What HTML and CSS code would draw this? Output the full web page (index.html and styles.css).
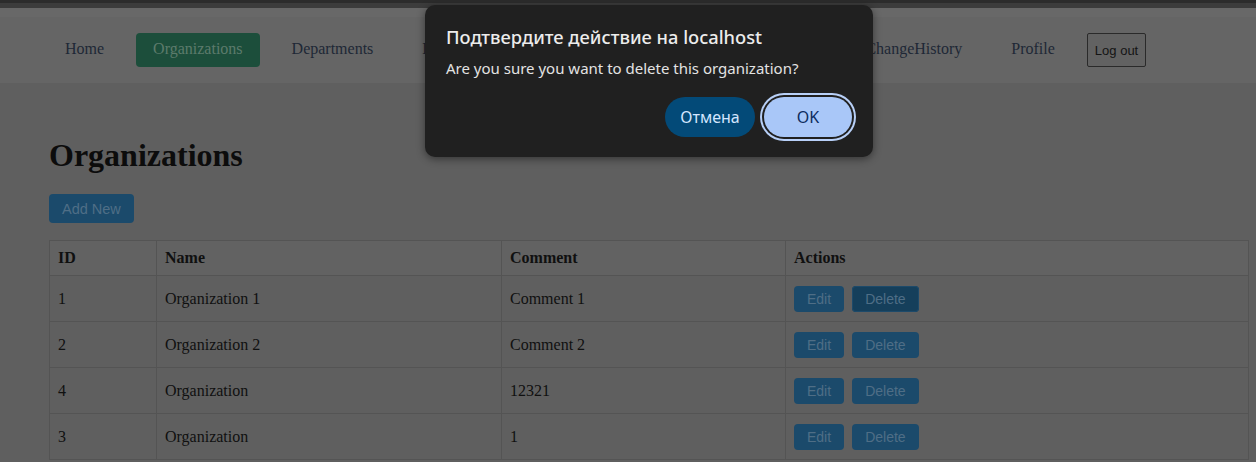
FILE: index.html
```html
<!DOCTYPE html>
<html lang="en">
<head>
<meta charset="utf-8">
<title>Organizations</title>
<link rel="stylesheet" href="styles.css">
</head>
<body>
<div class="chrome"></div>
<nav class="nav">
  <ul class="nav-list">
    <li><a class="nav-link" href="#">Home</a></li>
    <li><a class="nav-link active" href="#">Organizations</a></li>
    <li><a class="nav-link" href="#">Departments</a></li>
    <li><a class="nav-link" href="#">Employees</a></li>
    <li><a class="nav-link" href="#">Positions</a></li>
    <li><a class="nav-link" href="#">Products</a></li>
    <li><a class="nav-link" href="#">Contracts</a></li>
    <li><a class="nav-link" href="#">ChangeHistory</a></li>
    <li><a class="nav-link" href="#">Profile</a></li>
    <li><button class="logout">Log out</button></li>
  </ul>
</nav>
<main class="content">
  <h1 class="title">Organizations</h1>
  <button class="btn btn-add">Add New</button>
  <table class="grid">
    <colgroup>
      <col class="c-id"><col class="c-name"><col class="c-comment"><col class="c-actions">
    </colgroup>
    <thead>
      <tr><th>ID</th><th>Name</th><th>Comment</th><th>Actions</th></tr>
    </thead>
    <tbody>
      <tr><td>1</td><td>Organization 1</td><td>Comment 1</td><td><button class="btn">Edit</button><button class="btn btn-focus">Delete</button></td></tr>
      <tr><td>2</td><td>Organization 2</td><td>Comment 2</td><td><button class="btn">Edit</button><button class="btn">Delete</button></td></tr>
      <tr><td>4</td><td>Organization</td><td>12321</td><td><button class="btn">Edit</button><button class="btn">Delete</button></td></tr>
      <tr><td>3</td><td>Organization</td><td>1</td><td><button class="btn">Edit</button><button class="btn">Delete</button></td></tr>
    </tbody>
  </table>
</main>
<div class="dialog" role="dialog">
  <div class="dlg-title">Подтвердите действие на localhost</div>
  <div class="dlg-msg">Are you sure you want to delete this organization?</div>
  <div class="dlg-actions">
    <button class="dlg-btn dlg-cancel">Отмена</button>
    <button class="dlg-btn dlg-ok">OK</button>
  </div>
</div>
</body>
</html>
```
FILE: styles.css
```css
html, body {
  margin: 0;
  padding: 0;
}
body {
  background: #5f5f5f;
  font-family: "Liberation Serif", "Times New Roman", serif;
  font-size: 16px;
  color: #101010;
  width: 1256px;
  height: 462px;
  overflow: hidden;
  position: relative;
}
.chrome {
  height: 5px;
  background: #3c3c3c;
  border-top: 3px solid #2c2c2c;
}
.nav {
  background: #656565;
  border-top: 9px solid #686868;
  height: 75px;
  box-sizing: border-box;
  padding-top: 16px;
}
.nav-list {
  list-style: none;
  margin: 0;
  padding: 0 0 0 48px;
  display: flex;
  gap: 15px;
  align-items: center;
}
.nav-link {
  display: block;
  height: 34px;
  line-height: 32px;
  padding: 0 17px;
  color: #1e2836;
  text-decoration: none;
  border-radius: 4px;
}
.nav-link.active {
  background: #1c4e3b;
  color: #5c7b6c;
}
.logout {
  font-family: "Liberation Sans", Arial, sans-serif;
  font-size: 13px;
  color: #141414;
  background: #626262;
  border: 1px solid #2a2a2a;
  border-radius: 2px;
  height: 34px;
  padding: 0 7px;
}
.content {
  padding: 54px 7px 0 49px;
}
.title {
  font-size: 32px;
  font-weight: bold;
  margin: 0 0 20px;
  line-height: 37px;
  color: #0c0c0c;
}
.btn {
  font-family: "Liberation Sans", Arial, sans-serif;
  font-size: 14px;
  color: #4f6e86;
  background: #1b4a6b;
  border: 0;
  border-radius: 4px;
  height: 26px;
  padding: 0 13px;
  margin-right: 8px;
  vertical-align: middle;
}
.btn-add {
  height: 29px;
  font-size: 14.5px;
  padding: 0 13px;
  margin: 0 0 17px;
  display: block;
}
.btn-focus {
  background: #153f5b;
  box-shadow: inset 0 0 0 1px #1d4a6a;
}
.grid {
  border-collapse: collapse;
  width: 1200px;
}
.c-id { width: 107px; }
.c-name { width: 345px; }
.c-comment { width: 284px; }
.grid th, .grid td {
  border: 1px solid #545454;
  text-align: left;
  padding: 8px;
  line-height: 18px;
}
.grid th {
  background: #626262;
  font-weight: bold;
  height: 18px;
}
.grid td {
  height: 29px;
}
.dialog {
  position: absolute;
  left: 425px;
  top: 5px;
  width: 448px;
  height: 152px;
  box-sizing: border-box;
  background: #202020;
  border-radius: 10px;
  box-shadow: 0 2px 8px rgba(0, 0, 0, 0.45);
  padding: 21px 18px 0 21px;
  font-family: "Noto Sans", "Open Sans", sans-serif;
  color: #ececec;
}
.dlg-title {
  font-size: 18.3px;
  line-height: 22px;
  font-weight: 500;
  margin-bottom: 10px;
}
.dlg-msg {
  font-size: 15px;
  line-height: 20px;
  color: #e3e3e3;
}
.dlg-actions {
  display: flex;
  justify-content: flex-end;
  gap: 9px;
  margin-top: 19px;
}
.dlg-btn {
  font-family: "Noto Sans", "Open Sans", sans-serif;
  font-size: 16px;
  height: 40px;
  border-radius: 20px;
  border: 0;
  padding: 0;
}
.dlg-cancel {
  width: 90px;
  background: #034a78;
  color: #d3e6ff;
}
.dlg-ok {
  width: 88px;
  background: #a9c7f8;
  color: #0d2c5e;
  box-shadow: 0 0 0 2px #202020, 0 0 0 4px #b8d0f8;
  margin-right: 3px;
}
```
